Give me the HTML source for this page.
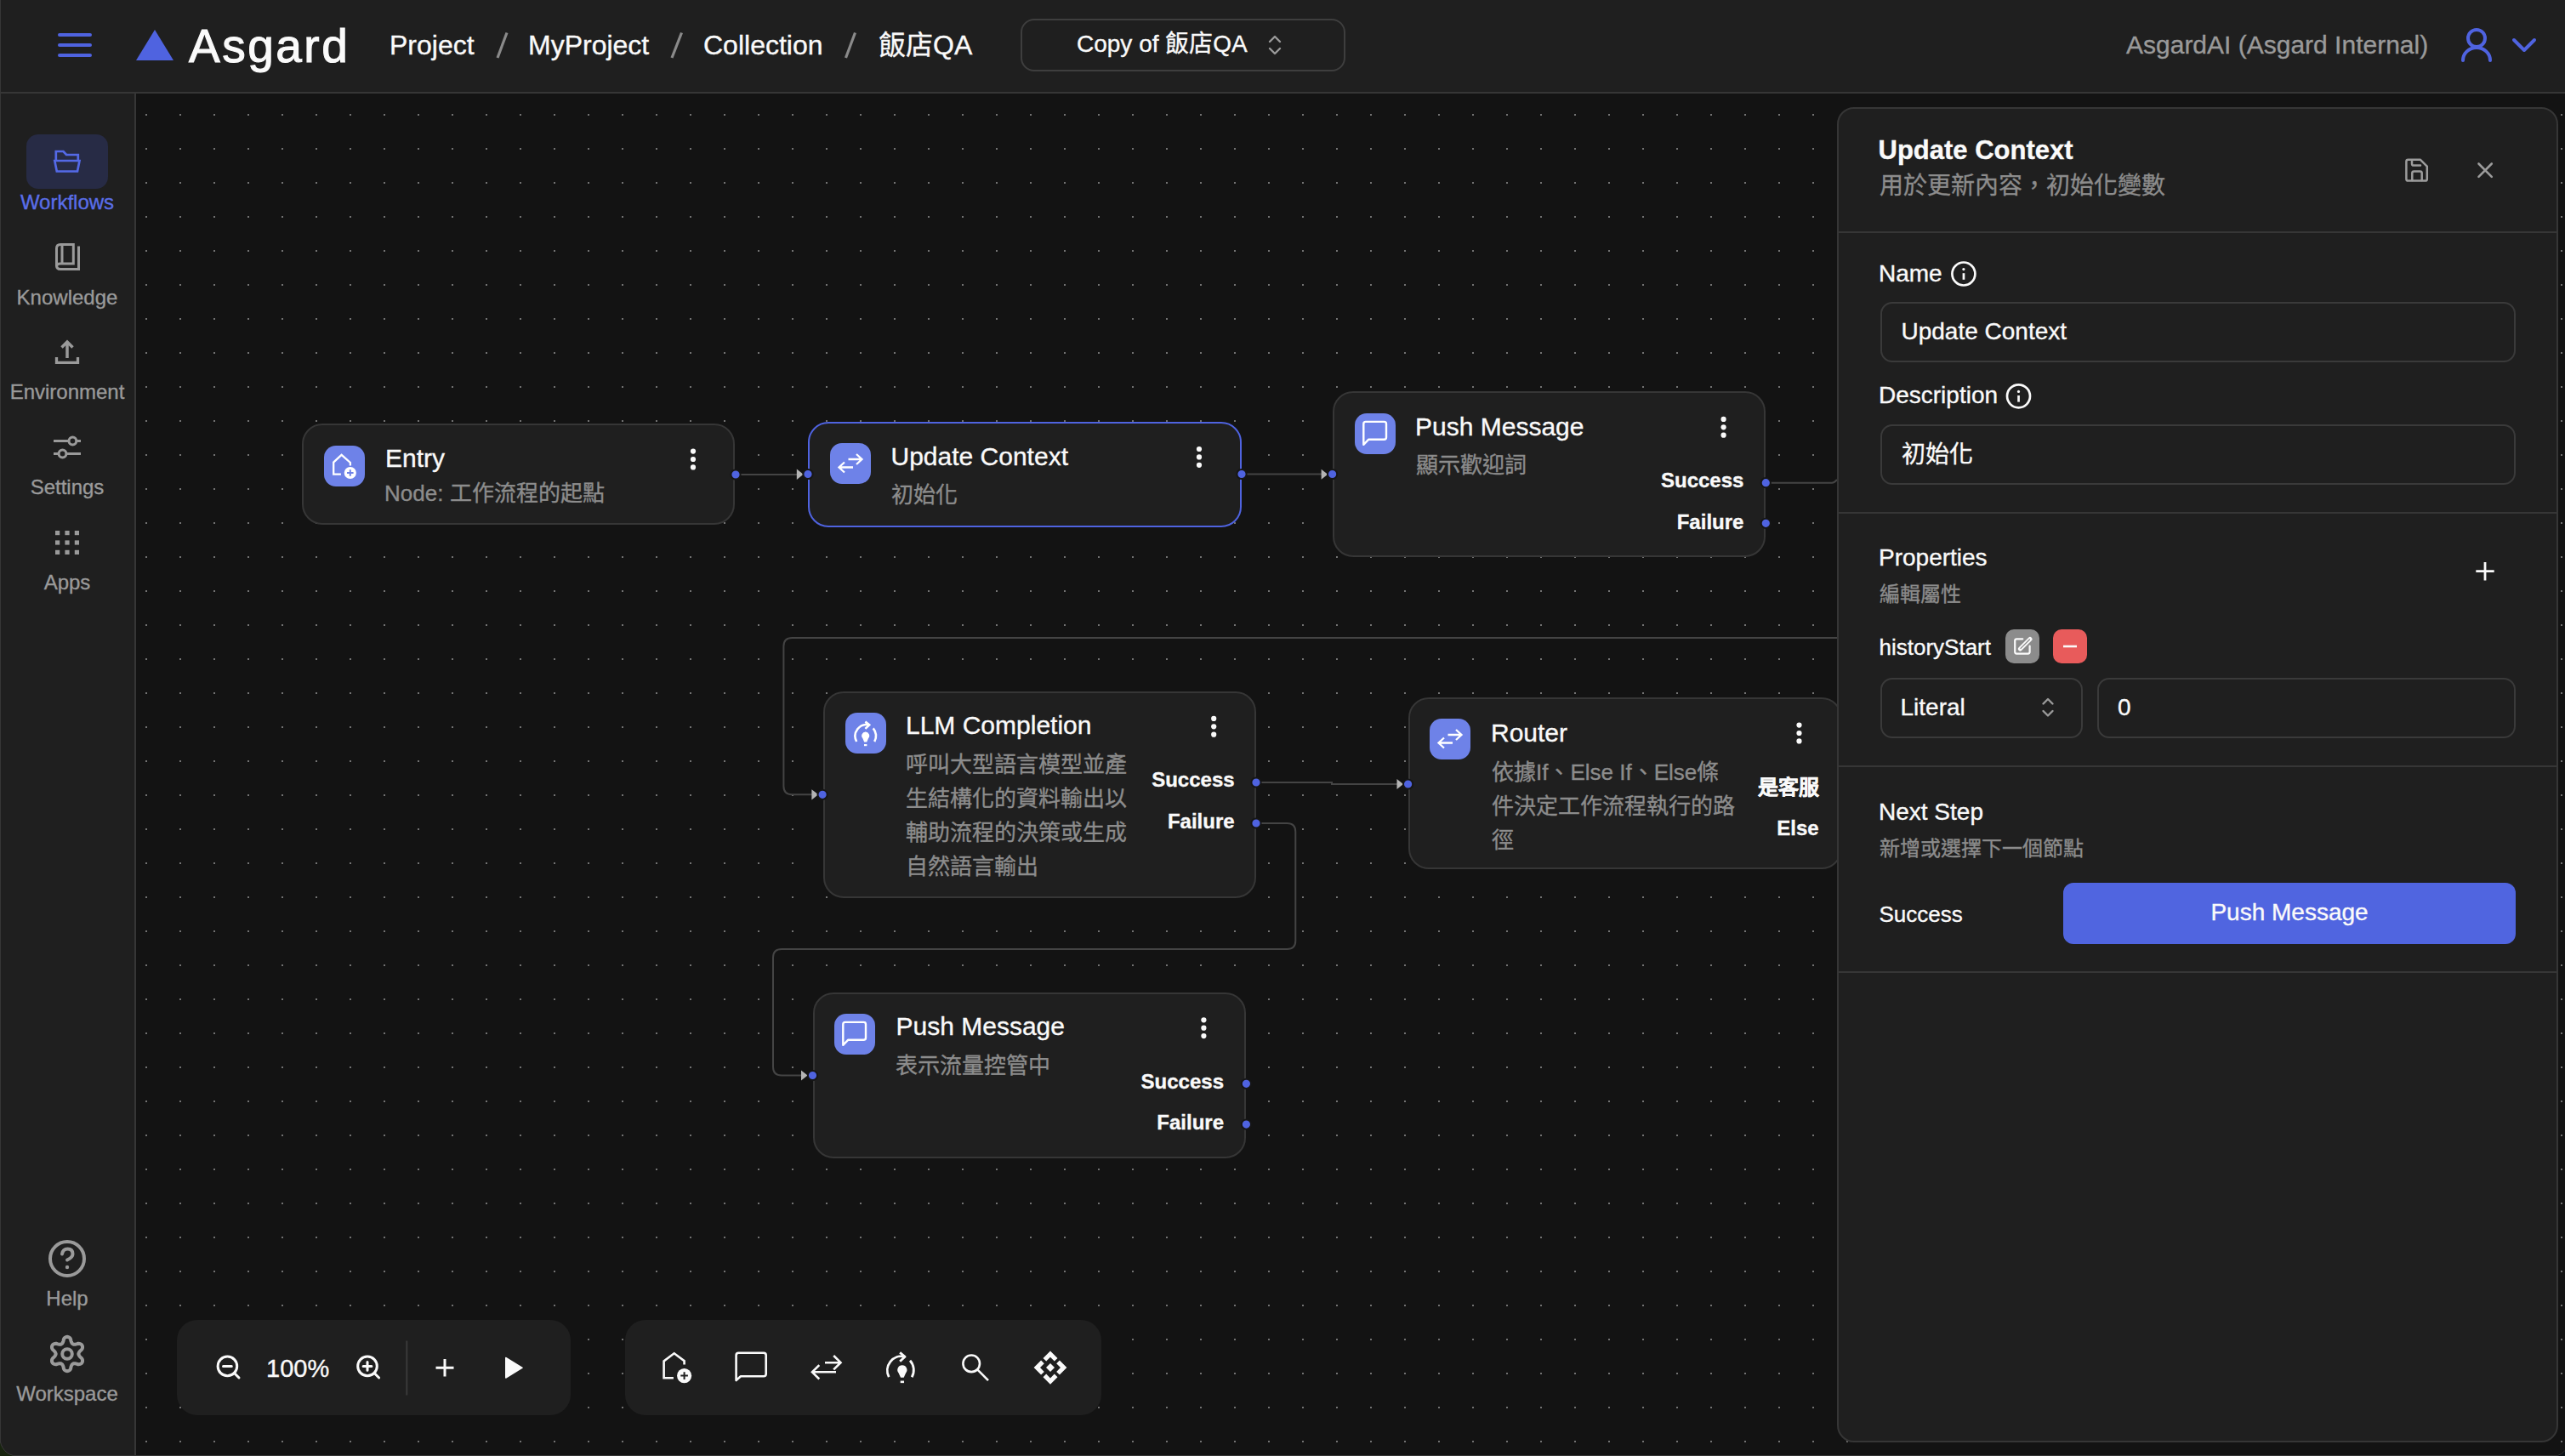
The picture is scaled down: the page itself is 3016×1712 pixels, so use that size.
<!DOCTYPE html>
<html lang="zh-TW">
<head>
<meta charset="utf-8">
<style>
*{margin:0;padding:0;box-sizing:border-box}
html,body{width:3016px;height:1712px;overflow:hidden;background:#131313}
body{position:relative;font-family:"Liberation Sans",sans-serif;color:#fafafa}
.a{position:absolute}
.t{position:absolute;white-space:nowrap;line-height:1;font-family:"Liberation Sans",sans-serif;font-weight:500;-webkit-text-stroke:0.35px currentColor}
svg{position:absolute;overflow:visible}
.node{position:absolute;background:#1f1f1f;border:2px solid #363636;border-radius:24px}
.ico{position:absolute;width:48px;height:48px;border-radius:14px;background:#6e82e8}
.inp{position:absolute;border:2px solid #3a3a3a;border-radius:14px;background:#1f1f1f}
</style>
</head>
<body>
<svg class="a" style="left:0;top:0" width="3016" height="1712">
<defs><pattern id="dots" x="171" y="134" width="40" height="40" patternUnits="userSpaceOnUse"><rect x="0" y="0" width="2" height="2" fill="#727272"/></pattern></defs>
<rect x="160" y="110" width="2856" height="1602" fill="url(#dots)"/>
</svg>
<svg class="a" style="left:0;top:0" width="3016" height="1712">
<g fill="none" stroke="#444444" stroke-width="2">
<path d="M865,558 H938"/>
<path d="M1460,557.5 H1555"/>
<path d="M2076,567.7 H2154 Q2157,567.7 2160,564"/>
<path d="M2160,750 H931.4 Q921.4,750 921.4,760 V924.3 Q921.4,934.3 931.4,934.3 H956"/>
<path d="M1477,920 H1566 V922 H1644"/>
<path d="M1477,968 H1513.3 Q1523.3,968 1523.3,978 V1106 Q1523.3,1116 1513.3,1116 H919 Q909,1116 909,1126 V1254.5 Q909,1264.5 919,1264.5 H944"/>
</g>
<g fill="#b4b4b4">
<polygon points="936.8,551.6 944.6,557.8 936.8,564"/>
<polygon points="1553.6,551.7 1561.2,557.7 1553.6,563.7"/>
<polygon points="954.4,928.2 962.2,934.3 954.4,940.4"/>
<polygon points="1642.5,916 1650,922 1642.5,928"/>
<polygon points="942,1258.5 949.6,1264.5 942,1270.5"/>
</g>
</svg>
<div class="node" style="left:355px;top:498px;width:509px;height:119px;"></div>
<div class="node" style="left:950px;top:495.5px;width:510px;height:124.0px;border:2.5px solid #4f63e0"></div>
<div class="node" style="left:1567px;top:460px;width:509px;height:195px;"></div>
<div class="node" style="left:968px;top:813px;width:509px;height:243px;"></div>
<div class="node" style="left:1656px;top:820px;width:510px;height:202px;"></div>
<div class="node" style="left:956px;top:1167px;width:509px;height:195px;"></div>
<div class="ico" style="left:381px;top:524px"></div>
<div class="ico" style="left:976px;top:521px"></div>
<div class="ico" style="left:1593px;top:486px"></div>
<div class="ico" style="left:994px;top:838px"></div>
<div class="ico" style="left:1681px;top:845px"></div>
<div class="ico" style="left:981px;top:1192px"></div>
<div class="t" style="left:453.0px;top:523.6px;font-size:30px;color:#fafafa;font-weight:500;">Entry</div>
<div class="t" style="left:1047.5px;top:521.8px;font-size:30px;color:#fafafa;font-weight:500;">Update Context</div>
<div class="t" style="left:1664.0px;top:487.0px;font-size:30px;color:#fafafa;font-weight:500;">Push Message</div>
<div class="t" style="left:1065.0px;top:838.0px;font-size:30px;color:#fafafa;font-weight:500;">LLM Completion</div>
<div class="t" style="left:1753.0px;top:846.6px;font-size:30px;color:#fafafa;font-weight:500;">Router</div>
<div class="t" style="left:1053.5px;top:1192.4px;font-size:30px;color:#fafafa;font-weight:500;">Push Message</div>
<div class="t" style="left:452.0px;top:567.2px;font-size:26px;color:#8c8c8c;font-weight:500;">Node: 工作流程的起點</div>
<div class="t" style="left:1048.0px;top:568.6px;font-size:26px;color:#8c8c8c;font-weight:500;">初始化</div>
<div class="t" style="left:1665.0px;top:534.0px;font-size:26px;color:#8c8c8c;font-weight:500;">顯示歡迎詞</div>
<div class="t" style="left:1065px;top:878.7px;font-size:26px;line-height:40px;color:#8c8c8c;white-space:normal;width:270px">呼叫大型語言模型並產<br>生結構化的資料輸出以<br>輔助流程的決策或生成<br>自然語言輸出</div>
<div class="t" style="left:1754px;top:887.5px;font-size:26px;line-height:40px;color:#8c8c8c;white-space:normal;width:300px">依據If、Else If、Else條<br>件決定工作流程執行的路<br>徑</div>
<div class="t" style="left:1053.0px;top:1239.5px;font-size:26px;color:#8c8c8c;font-weight:500;">表示流量控管中</div>
<div class="t" style="right:965.6px;top:553.2px;font-size:24px;color:#fafafa;font-weight:bold;">Success</div>
<div class="t" style="right:965.6px;top:601.5px;font-size:24px;color:#fafafa;font-weight:bold;">Failure</div>
<div class="t" style="right:1564.4px;top:905.1px;font-size:24px;color:#fafafa;font-weight:bold;">Success</div>
<div class="t" style="right:1564.4px;top:953.5px;font-size:24px;color:#fafafa;font-weight:bold;">Failure</div>
<div class="t" style="right:877.4px;top:914.2px;font-size:24px;color:#fafafa;font-weight:bold;">是客服</div>
<div class="t" style="right:877.4px;top:961.7px;font-size:24px;color:#fafafa;font-weight:bold;">Else</div>
<div class="t" style="right:1577.0px;top:1259.7px;font-size:24px;color:#fafafa;font-weight:bold;">Success</div>
<div class="t" style="right:1577.0px;top:1307.5px;font-size:24px;color:#fafafa;font-weight:bold;">Failure</div>
<svg class="a" style="left:0;top:0" width="3016" height="1712">
<circle cx="865" cy="558" r="5.6" fill="#4f63e0" stroke="#161616" stroke-width="2"/>
<circle cx="950" cy="557.5" r="5.6" fill="#4f63e0" stroke="#161616" stroke-width="2"/>
<circle cx="1460" cy="557.5" r="5.6" fill="#4f63e0" stroke="#161616" stroke-width="2"/>
<circle cx="1566.6" cy="557.5" r="5.6" fill="#4f63e0" stroke="#161616" stroke-width="2"/>
<circle cx="2076.3" cy="567.7" r="5.6" fill="#4f63e0" stroke="#161616" stroke-width="2"/>
<circle cx="2076.3" cy="615.3" r="5.6" fill="#4f63e0" stroke="#161616" stroke-width="2"/>
<circle cx="967.1" cy="934.3" r="5.6" fill="#4f63e0" stroke="#161616" stroke-width="2"/>
<circle cx="1477" cy="920" r="5.6" fill="#4f63e0" stroke="#161616" stroke-width="2"/>
<circle cx="1477" cy="968" r="5.6" fill="#4f63e0" stroke="#161616" stroke-width="2"/>
<circle cx="1655.6" cy="922" r="5.6" fill="#4f63e0" stroke="#161616" stroke-width="2"/>
<circle cx="955.5" cy="1264.5" r="5.6" fill="#4f63e0" stroke="#161616" stroke-width="2"/>
<circle cx="1465.4" cy="1274.3" r="5.6" fill="#4f63e0" stroke="#161616" stroke-width="2"/>
<circle cx="1465.4" cy="1322.1" r="5.6" fill="#4f63e0" stroke="#161616" stroke-width="2"/>
<circle cx="815" cy="530.6" r="3.1" fill="#fafafa"/>
<circle cx="815" cy="540.0" r="3.1" fill="#fafafa"/>
<circle cx="815" cy="549.4" r="3.1" fill="#fafafa"/>
<circle cx="1410" cy="528.0" r="3.1" fill="#fafafa"/>
<circle cx="1410" cy="537.4" r="3.1" fill="#fafafa"/>
<circle cx="1410" cy="546.8" r="3.1" fill="#fafafa"/>
<circle cx="2026.6" cy="492.9" r="3.1" fill="#fafafa"/>
<circle cx="2026.6" cy="502.3" r="3.1" fill="#fafafa"/>
<circle cx="2026.6" cy="511.7" r="3.1" fill="#fafafa"/>
<circle cx="1427.2" cy="844.9" r="3.1" fill="#fafafa"/>
<circle cx="1427.2" cy="854.3" r="3.1" fill="#fafafa"/>
<circle cx="1427.2" cy="863.7" r="3.1" fill="#fafafa"/>
<circle cx="2115.5" cy="852.6" r="3.1" fill="#fafafa"/>
<circle cx="2115.5" cy="862.0" r="3.1" fill="#fafafa"/>
<circle cx="2115.5" cy="871.4" r="3.1" fill="#fafafa"/>
<circle cx="1415.4" cy="1199.3" r="3.1" fill="#fafafa"/>
<circle cx="1415.4" cy="1208.7" r="3.1" fill="#fafafa"/>
<circle cx="1415.4" cy="1218.1" r="3.1" fill="#fafafa"/>
<g transform="translate(381,524) scale(1.0)" fill="none" stroke="#ffffff" stroke-width="2.3"><path d="M19.9,33.7 H11.2 V19.6 L20.6,10.9 L30.9,20 V23.6"/><circle cx="30.8" cy="32" r="7.1" fill="#ffffff" stroke="none"/><path d="M30.8,28.2 V35.8 M27,32 H34.6" stroke="#6e82e8" stroke-width="2"/></g>
<g transform="translate(976,521) scale(1.0)" fill="none" stroke="#ffffff" stroke-width="2.3"><path d="M21.5,19 H37.5 M31,13 L37.5,19 L31,25 M27,28.5 H10.5 M17,22.5 L10.5,28.5 L17,34.5"/></g>
<g transform="translate(1593,486) scale(1.0)" fill="none" stroke="#ffffff" stroke-width="2.4" stroke-linejoin="round"><path d="M10.3,36.8 V12.4 Q10.3,9.9 12.8,9.9 H34.5 Q37,9.9 37,12.4 V28.2 Q37,30.7 34.5,30.7 H16.3 Z"/></g>
<g transform="translate(994,838) scale(1.0)" fill="none" stroke="#ffffff" stroke-width="2.6"><path d="M13.2,34 A13.5,13.5 0 0 1 28.2,14.4"/><path d="M23.4,10.4 L28.2,14.4 L23.4,18.9"/><path d="M32.7,18.3 A13.5,13.5 0 0 1 34.2,34"/><path d="M23.7,22.5 a4.6,4.6 0 0 1 3.4,7.6 L25.2,34.4 H22.2 L20.3,30.1 a4.6,4.6 0 0 1 3.4,-7.6 Z" fill="#ffffff" stroke="none"/><rect x="22" y="37" width="3.4" height="2.2" fill="#ffffff" stroke="none"/></g>
<g transform="translate(1681,845) scale(1.0)" fill="none" stroke="#ffffff" stroke-width="2.3"><path d="M21.5,19 H37.5 M31,13 L37.5,19 L31,25 M27,28.5 H10.5 M17,22.5 L10.5,28.5 L17,34.5"/></g>
<g transform="translate(981,1192) scale(1.0)" fill="none" stroke="#ffffff" stroke-width="2.4" stroke-linejoin="round"><path d="M10.3,36.8 V12.4 Q10.3,9.9 12.8,9.9 H34.5 Q37,9.9 37,12.4 V28.2 Q37,30.7 34.5,30.7 H16.3 Z"/></g>
</svg>
<div class="a" style="left:0;top:0;width:3016px;height:110px;background:#1f1f1f;border-bottom:2px solid #363636"></div>
<div class="a" style="left:0;top:110px;width:160px;height:1602px;background:#1f1f1f;border-right:2px solid #363636"></div>
<div class="a" style="left:0;top:0;width:1px;height:1712px;background:#363636"></div>
<svg class="a" style="left:0;top:0" width="3016" height="110">
<g stroke="#4f63e0" stroke-width="4" stroke-linecap="round">
<line x1="70" y1="41" x2="106" y2="41"/><line x1="70" y1="53" x2="106" y2="53"/><line x1="70" y1="65" x2="106" y2="65"/>
</g>
<polygon points="160,71 204,71 182,35" fill="#4f63e0"/>
<g stroke="#8a8a8a" stroke-width="3.2" stroke-linecap="butt">
<line x1="585" y1="68" x2="596" y2="38.5"/><line x1="790" y1="68" x2="801.5" y2="38.5"/><line x1="994.5" y1="68" x2="1005.5" y2="38.5"/>
</g>
<polyline points="1493,49 1499,43 1505,49" fill="none" stroke="#9a9a9a" stroke-width="2.4" stroke-linecap="round" stroke-linejoin="round"/>
<polyline points="1493,57 1499,63 1505,57" fill="none" stroke="#9a9a9a" stroke-width="2.4" stroke-linecap="round" stroke-linejoin="round"/>
<circle cx="2912" cy="45" r="10" fill="none" stroke="#4f63e0" stroke-width="4"/>
<path d="M2896,71 A16,15 0 0 1 2928,71" fill="none" stroke="#4f63e0" stroke-width="4" stroke-linecap="round"/>
<polyline points="2956,47 2968,59 2980,47" fill="none" stroke="#4f63e0" stroke-width="4" stroke-linecap="round" stroke-linejoin="round"/>
</svg>
<div class="t" style="left:222px;top:27px;font-size:55px;letter-spacing:2.5px;color:#fafafa;-webkit-text-stroke:1.1px #fafafa">Asgard</div>
<div class="t" style="left:458px;top:37px;font-size:32px;color:#fafafa">Project</div>
<div class="t" style="left:621px;top:37px;font-size:32px;color:#fafafa">MyProject</div>
<div class="t" style="left:827px;top:37px;font-size:32px;color:#fafafa">Collection</div>
<div class="t" style="left:1033px;top:37px;font-size:32px;color:#fafafa">飯店QA</div>
<div class="a" style="left:1200px;top:22px;width:382px;height:62px;border:2px solid #3e3e3e;border-radius:16px"></div>
<div class="t" style="left:1266.0px;top:38.3px;font-size:28px;color:#fafafa;font-weight:500;">Copy of 飯店QA</div>
<div class="t" style="left:2500.0px;top:38.0px;font-size:30px;color:#9a9a9a;font-weight:500;">AsgardAI (Asgard Internal)</div>
<div class="a" style="left:31px;top:158px;width:96px;height:64px;background:#272b45;border-radius:14px"></div>
<svg class="a" style="left:0;top:0" width="160" height="1712">
<path d="M65.8,189 V178 H74.5 L78,182 H91.8 V189 M64.3,189 H93.5 L91,201.5 H66.8 Z" fill="none" stroke="#5469e6" stroke-width="2.7"/>
<g fill="none" stroke="#9a9a9a" stroke-width="3">
<path d="M71,310 H86.3 V287.5 H71 Q66.5,287.5 66.5,292 V312 Q66.5,316.5 71,316.5 H92.5 V289.5"/>
<path d="M71,310 Q66.5,310 66.5,313.5"/>
<path d="M73,289 V310"/>
<path d="M79,421 V402 M72.5,408.5 L79,402 L85.5,408.5" stroke-width="3.5"/>
<path d="M66.5,420 V426.3 H91.5 V420" stroke-width="3.3"/>
<path d="M63,518.5 H95 M63,533.5 H95"/>
<circle cx="85.4" cy="518.5" r="4.4" fill="#1f1f1f"/>
<circle cx="73.5" cy="533.5" r="4.4" fill="#1f1f1f"/>
<circle cx="79" cy="1480" r="20" stroke-width="4"/>
<path d="M73,1474.5 Q74,1468.5 79.5,1468.5 Q85.5,1468.5 85.5,1474.5 Q85.5,1478.5 79,1481.5" stroke-width="4" stroke-linecap="round"/>
<path d="M79.0,1571.8 L79.7,1571.9 L80.4,1572.1 L81.1,1572.4 L81.7,1572.8 L82.3,1573.4 L82.8,1574.1 L83.2,1575.0 L83.4,1576.5 L83.7,1577.4 L84.0,1578.2 L84.3,1578.8 L84.6,1579.3 L85.0,1579.8 L85.3,1580.1 L85.7,1580.4 L86.1,1580.6 L86.6,1580.7 L87.2,1580.8 L87.8,1580.8 L88.5,1580.7 L89.2,1580.6 L90.2,1580.4 L91.6,1579.8 L92.6,1579.8 L93.5,1579.9 L94.3,1580.1 L95.0,1580.4 L95.6,1580.8 L96.1,1581.3 L96.5,1581.9 L96.8,1582.5 L97.0,1583.2 L97.0,1584.0 L97.0,1584.7 L96.8,1585.5 L96.4,1586.3 L95.8,1587.2 L94.6,1588.1 L94.0,1588.8 L93.5,1589.4 L93.1,1590.0 L92.8,1590.6 L92.6,1591.1 L92.4,1591.5 L92.4,1592.0 L92.4,1592.5 L92.6,1592.9 L92.8,1593.4 L93.1,1594.0 L93.5,1594.6 L94.0,1595.2 L94.6,1595.9 L95.8,1596.8 L96.4,1597.7 L96.8,1598.5 L97.0,1599.3 L97.0,1600.0 L97.0,1600.8 L96.8,1601.5 L96.5,1602.1 L96.1,1602.7 L95.6,1603.2 L95.0,1603.6 L94.3,1603.9 L93.5,1604.1 L92.6,1604.2 L91.6,1604.2 L90.2,1603.6 L89.2,1603.4 L88.5,1603.3 L87.8,1603.2 L87.2,1603.2 L86.6,1603.3 L86.1,1603.4 L85.7,1603.6 L85.3,1603.9 L85.0,1604.2 L84.6,1604.7 L84.3,1605.2 L84.0,1605.8 L83.7,1606.6 L83.4,1607.5 L83.2,1609.0 L82.8,1609.9 L82.3,1610.6 L81.7,1611.2 L81.1,1611.6 L80.4,1611.9 L79.7,1612.1 L79.0,1612.2 L78.3,1612.1 L77.6,1611.9 L76.9,1611.6 L76.3,1611.2 L75.7,1610.6 L75.2,1609.9 L74.8,1609.0 L74.6,1607.5 L74.3,1606.6 L74.0,1605.8 L73.7,1605.2 L73.4,1604.7 L73.0,1604.2 L72.7,1603.9 L72.3,1603.6 L71.9,1603.4 L71.4,1603.3 L70.8,1603.2 L70.2,1603.2 L69.5,1603.3 L68.8,1603.4 L67.8,1603.6 L66.4,1604.2 L65.4,1604.2 L64.5,1604.1 L63.7,1603.9 L63.0,1603.6 L62.4,1603.2 L61.9,1602.7 L61.5,1602.1 L61.2,1601.5 L61.0,1600.8 L61.0,1600.0 L61.0,1599.3 L61.2,1598.5 L61.6,1597.7 L62.2,1596.8 L63.4,1595.9 L64.0,1595.2 L64.5,1594.6 L64.9,1594.0 L65.2,1593.4 L65.4,1592.9 L65.6,1592.5 L65.6,1592.0 L65.6,1591.5 L65.4,1591.1 L65.2,1590.6 L64.9,1590.0 L64.5,1589.4 L64.0,1588.8 L63.4,1588.1 L62.2,1587.2 L61.6,1586.3 L61.2,1585.5 L61.0,1584.7 L61.0,1584.0 L61.0,1583.2 L61.2,1582.5 L61.5,1581.9 L61.9,1581.3 L62.4,1580.8 L63.0,1580.4 L63.7,1580.1 L64.5,1579.9 L65.4,1579.8 L66.4,1579.8 L67.8,1580.4 L68.8,1580.6 L69.5,1580.7 L70.2,1580.8 L70.8,1580.8 L71.4,1580.7 L71.9,1580.6 L72.3,1580.4 L72.7,1580.1 L73.0,1579.8 L73.4,1579.3 L73.7,1578.8 L74.0,1578.2 L74.3,1577.4 L74.6,1576.5 L74.8,1575.0 L75.2,1574.1 L75.7,1573.4 L76.3,1572.8 L76.9,1572.4 L77.6,1572.1 L78.3,1571.9 L79.0,1571.8Z" stroke-width="4"/>
<circle cx="79" cy="1592" r="5.8" stroke-width="4"/>
</g>
<g fill="#9a9a9a">
<circle cx="79" cy="1490" r="2.2"/>
<rect x="65" y="624" width="5.2" height="5.2"/><rect x="76.4" y="624" width="5.2" height="5.2"/><rect x="87.8" y="624" width="5.2" height="5.2"/><rect x="65" y="635.4" width="5.2" height="5.2"/><rect x="76.4" y="635.4" width="5.2" height="5.2"/><rect x="87.8" y="635.4" width="5.2" height="5.2"/><rect x="65" y="646.8" width="5.2" height="5.2"/><rect x="76.4" y="646.8" width="5.2" height="5.2"/><rect x="87.8" y="646.8" width="5.2" height="5.2"/></g></svg>
<div class="t" style="left:-221.0px;width:600px;text-align:center;top:226.2px;font-size:24px;color:#5a6ee8;font-weight:500;">Workflows</div>
<div class="t" style="left:-221.0px;width:600px;text-align:center;top:337.7px;font-size:24px;color:#9a9a9a;font-weight:500;">Knowledge</div>
<div class="t" style="left:-221.0px;width:600px;text-align:center;top:448.7px;font-size:24px;color:#9a9a9a;font-weight:500;">Environment</div>
<div class="t" style="left:-221.0px;width:600px;text-align:center;top:561.4px;font-size:24px;color:#9a9a9a;font-weight:500;">Settings</div>
<div class="t" style="left:-221.0px;width:600px;text-align:center;top:673.3px;font-size:24px;color:#9a9a9a;font-weight:500;">Apps</div>
<div class="t" style="left:-221.0px;width:600px;text-align:center;top:1515.3px;font-size:24px;color:#9a9a9a;font-weight:500;">Help</div>
<div class="t" style="left:-221.0px;width:600px;text-align:center;top:1627.2px;font-size:24px;color:#9a9a9a;font-weight:500;">Workspace</div>
<div class="a" style="left:208px;top:1552px;width:463px;height:112px;background:#1f1f1f;border-radius:24px"></div>
<div class="a" style="left:735px;top:1552px;width:560px;height:112px;background:#1f1f1f;border-radius:24px"></div>
<div class="t" style="left:313.0px;top:1595.0px;font-size:29px;color:#fafafa;font-weight:500;">100%</div>
<svg class="a" style="left:0;top:0" width="3016" height="1712">
<g fill="none" stroke="#fafafa" stroke-width="3" stroke-linecap="round">
<circle cx="267.4" cy="1606.4" r="11.3"/><path d="M275.5,1614.5 L281,1620 M262.5,1606.4 H272.3"/>
<circle cx="432" cy="1606.4" r="11.3"/><path d="M440.1,1614.5 L445.6,1620 M427.1,1606.4 H436.9 M432,1601.5 V1611.3"/>
<path d="M523,1598 V1618.6 M512.5,1608.3 H533.5" stroke-linecap="butt"/>
</g>
<rect x="477.3" y="1576.5" width="2" height="64" fill="#3a3a3a"/>
<path d="M595.5,1596 L614.5,1607.8 Q615.5,1608.3 614.5,1608.8 L595.5,1620.6 Q594,1621.4 594,1619.8 V1596.8 Q594,1595.2 595.5,1596 Z" fill="#fafafa"/>

</svg>
<svg class="a" style="left:0;top:0" width="3016" height="1712"><g fill="none" stroke="#fafafa" stroke-width="2.6"><path d="M791.9,1620.2 H780.6 V1600.4 L792.7,1591.3 L804.6,1600.2 V1604.6"/></g><circle cx="804.6" cy="1617.6" r="8.6" fill="#fafafa"/><path d="M804.6,1613.3 V1621.9 M800.3,1617.6 H808.9" stroke="#1f1f1f" stroke-width="2"/><g fill="none" stroke="#fafafa" stroke-width="2.6" stroke-linejoin="round"><path d="M865.6,1623 V1593.5 Q865.6,1590.7 868.4,1590.7 H897.9 Q900.7,1590.7 900.7,1593.5 V1615.4 Q900.7,1618.2 897.9,1618.2 H871 Z"/><path d="M970,1602.2 H988.5 M980.2,1594 L988.5,1602.2 L980.2,1610.4 M983,1613.3 H955 M963.3,1605.1 L955,1613.3 L963.3,1621.5" stroke-linejoin="miter"/><g transform="translate(1058.7,1609.5) scale(1.08) translate(-1057,-1607.5)"><path d="M1044.5,1616.5 A15.5,15.5 0 0 1 1062,1594.3 M1056.5,1589.8 L1062,1594.3 L1056.5,1599.4 M1067.5,1598.5 A15.5,15.5 0 0 1 1069.5,1616.5"/></g><circle cx="1142.2" cy="1603.3" r="9.8"/><path d="M1149.3,1610.4 L1162,1623.1"/></g><g transform="translate(1058.7,1609.5) scale(1.08) translate(-1057,-1607.5)"><path d="M1059,1603.5 a5.2,5.2 0 0 1 3.9,8.6 L1060.7,1617 H1057.3 L1055.1,1612.1 a5.2,5.2 0 0 1 3.9,-8.6 Z" fill="#fafafa"/><rect x="1057" y="1620.5" width="4" height="2.4" fill="#fafafa"/></g><g fill="#fafafa"><polygon points="1235,1603.1 1240,1608.1 1235,1613.1 1230,1608.1"/><path d="M1235,1588.3999999999999 L1243.5,1596.8999999999999 L1239.8,1600.6 L1235,1595.8 L1230.2,1600.6 L1226.5,1596.8999999999999 Z"/><path d="M1235,1627.8 L1243.5,1619.3 L1239.8,1615.6 L1235,1620.3999999999999 L1230.2,1615.6 L1226.5,1619.3 Z"/><path d="M1215.6,1608.1 L1224.1,1599.6 L1227.8,1603.3 L1223,1608.1 L1227.8,1612.8999999999999 L1224.1,1616.6 Z"/><path d="M1254.4,1608.1 L1245.9,1599.6 L1242.2,1603.3 L1247,1608.1 L1242.2,1612.8999999999999 L1245.9,1616.6 Z"/></g></svg>
<div class="a" style="left:2160px;top:126px;width:848px;height:1570px;background:#1f1f1f;border:2px solid #363636;border-radius:20px"></div>
<div class="t" style="left:2208.5px;top:161.4px;font-size:31px;color:#fafafa;font-weight:bold;">Update Context</div>
<div class="t" style="left:2210.0px;top:205.3px;font-size:28px;color:#8c8c8c;font-weight:500;">用於更新內容，初始化變數</div>
<div class="a" style="left:2162px;top:272px;width:844px;height:2px;background:#363636"></div>
<div class="t" style="left:2209.0px;top:308.3px;font-size:28px;color:#fafafa;font-weight:500;">Name</div>
<div class="inp" style="left:2211px;top:354.5px;width:747px;height:71px"></div>
<div class="t" style="left:2235.5px;top:376.3px;font-size:28px;color:#fafafa;font-weight:500;">Update Context</div>
<div class="t" style="left:2209.0px;top:451.3px;font-size:28px;color:#fafafa;font-weight:500;">Description</div>
<div class="inp" style="left:2211px;top:498.5px;width:747px;height:71px"></div>
<div class="t" style="left:2236.0px;top:520.8px;font-size:28px;color:#fafafa;font-weight:500;">初始化</div>
<div class="a" style="left:2162px;top:602px;width:844px;height:2px;background:#363636"></div>
<div class="t" style="left:2209.0px;top:641.6px;font-size:28px;color:#fafafa;font-weight:500;">Properties</div>
<div class="t" style="left:2210.0px;top:687.2px;font-size:24px;color:#8c8c8c;font-weight:500;">編輯屬性</div>
<div class="t" style="left:2209.5px;top:747.6px;font-size:26px;color:#fafafa;font-weight:500;">historyStart</div>
<div class="a" style="left:2358px;top:740px;width:40px;height:40px;background:#8c8c8c;border-radius:10px"></div>
<div class="a" style="left:2414px;top:740px;width:40px;height:40px;background:#e85b5b;border-radius:10px"></div>
<div class="inp" style="left:2211px;top:796.5px;width:238px;height:71px"></div>
<div class="inp" style="left:2466px;top:796.5px;width:492px;height:71px"></div>
<div class="t" style="left:2234.5px;top:818.3px;font-size:28px;color:#fafafa;font-weight:500;">Literal</div>
<div class="t" style="left:2490.0px;top:818.3px;font-size:28px;color:#fafafa;font-weight:500;">0</div>
<div class="a" style="left:2162px;top:900px;width:844px;height:2px;background:#363636"></div>
<div class="t" style="left:2209.0px;top:940.8px;font-size:28px;color:#fafafa;font-weight:500;">Next Step</div>
<div class="t" style="left:2210.0px;top:985.7px;font-size:24px;color:#8c8c8c;font-weight:500;">新增或選擇下一個節點</div>
<div class="t" style="left:2209.5px;top:1062.0px;font-size:26px;color:#fafafa;font-weight:500;">Success</div>
<div class="a" style="left:2426px;top:1038px;width:532px;height:71.5px;background:#5065e0;border-radius:12px"></div>
<div class="t" style="left:2392.0px;width:600px;text-align:center;top:1059.1px;font-size:28px;color:#fafafa;font-weight:500;">Push Message</div>
<div class="a" style="left:2162px;top:1142px;width:844px;height:2px;background:#363636"></div>
<svg class="a" style="left:0;top:0" width="3016" height="1712">
<g fill="none" stroke="#9c9c9c" stroke-width="2.5" stroke-linecap="round" stroke-linejoin="round">
<path d="M2831.5,187.8 H2846 L2853.8,195.6 V210.5 Q2853.8,212.6 2851.7,212.6 H2831.5 Q2829.4,212.6 2829.4,210.5 V189.9 Q2829.4,187.8 2831.5,187.8 Z"/>
<path d="M2836,188.5 V192.5 Q2836,194.6 2838.1,194.6 H2846"/>
<path d="M2836.3,212 V203.6 Q2836.3,201.5 2838.4,201.5 H2845.6 Q2847.7,201.5 2847.7,203.6 V212"/>
<path d="M2914.5,192.5 L2929.8,207.8 M2929.8,192.5 L2914.5,207.8" stroke-width="2.6"/>
</g>
<g fill="none" stroke="#fafafa" stroke-width="2.7">
<circle cx="2308.9" cy="322" r="13.5"/>
<circle cx="2373.5" cy="465.8" r="13.5"/>
</g>
<g fill="#fafafa">
<rect x="2307.6" y="321.2" width="2.7" height="7.6"/><circle cx="2308.9" cy="316.6" r="1.6"/>
<rect x="2372.2" y="465" width="2.7" height="7.6"/><circle cx="2373.5" cy="460.4" r="1.6"/>
</g>
<path d="M2922,661 V682.5 M2911.3,671.7 H2932.7" stroke="#fafafa" stroke-width="2.8"/>
<g fill="none" stroke="#fafafa" stroke-width="2.4" stroke-linecap="round" stroke-linejoin="round">
<path d="M2378.3,751.3 H2371.2 Q2369.2,751.3 2369.2,753.3 V766.6 Q2369.2,768.6 2371.2,768.6 H2384.6 Q2386.6,768.6 2386.6,766.6 V759.6" stroke-width="2.2"/>
</g>
<path d="M2375.4,763 L2387,751.4" stroke="#fafafa" stroke-width="5" stroke-linecap="round"/>
<path d="M2376,762.4 L2386.4,752" stroke="#8c8c8c" stroke-width="1.3" stroke-linecap="round"/>
<path d="M2426,760 H2442" stroke="#fafafa" stroke-width="2.6"/>
<g fill="none" stroke="#9a9a9a" stroke-width="2.4" stroke-linecap="round" stroke-linejoin="round">
<polyline points="2402.5,827.5 2408,822 2413.5,827.5"/>
<polyline points="2402.5,836 2408,841.5 2413.5,836"/>
</g>
</svg>
<div class="a" style="left:0;top:1711px;width:3016px;height:1px;background:#363636"></div>
<svg class="a" style="left:0;top:0" width="3016" height="1712">
<path d="M0,1691 A20,21 0 0 0 19,1712 L0,1712 Z" fill="#18240f"/>
<path d="M0,1691 A20,21 0 0 0 19,1712" fill="none" stroke="#3a3a3a" stroke-width="1"/>
<path d="M3016,1705.6 A21,21 0 0 1 3006.4,1712 L3016,1712 Z" fill="#0c1218"/>
<path d="M3016,1705.6 A21,21 0 0 1 3006.4,1712" fill="none" stroke="#333" stroke-width="1"/>
</svg>
</body>
</html>
